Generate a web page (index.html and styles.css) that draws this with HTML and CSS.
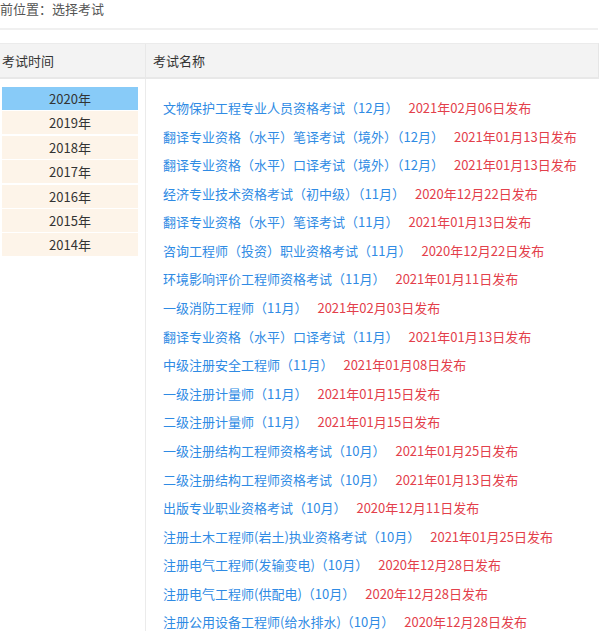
FILE: index.html
```html
<!DOCTYPE html>
<html lang="zh-CN">
<head>
  <meta charset="UTF-8">
  <title>选择考试</title>
  <link rel="stylesheet" href="styles.css">
</head>
<body>

  <div class="crumb">前位置：选择考试</div>

  <div class="exam-table">
    <div class="head-row">
      <div class="head-cell head-time">考试时间</div>
      <div class="head-cell">考试名称</div>
    </div>

    <div class="body-row">
      <ul class="years">
        <li class="year active">2020年</li>
        <li class="year">2019年</li>
        <li class="year">2018年</li>
        <li class="year">2017年</li>
        <li class="year">2016年</li>
        <li class="year">2015年</li>
        <li class="year">2014年</li>
      </ul>

      <ul class="exams">
        <li><a href="#">文物保护工程专业人员资格考试（12月）</a><span class="date">2021年02月06日发布</span></li>
        <li><a href="#">翻译专业资格（水平）笔译考试（境外）（12月）</a><span class="date">2021年01月13日发布</span></li>
        <li><a href="#">翻译专业资格（水平）口译考试（境外）（12月）</a><span class="date">2021年01月13日发布</span></li>
        <li><a href="#">经济专业技术资格考试（初中级）（11月）</a><span class="date">2020年12月22日发布</span></li>
        <li><a href="#">翻译专业资格（水平）笔译考试（11月）</a><span class="date">2021年01月13日发布</span></li>
        <li><a href="#">咨询工程师（投资）职业资格考试（11月）</a><span class="date">2020年12月22日发布</span></li>
        <li><a href="#">环境影响评价工程师资格考试（11月）</a><span class="date">2021年01月11日发布</span></li>
        <li><a href="#">一级消防工程师（11月）</a><span class="date">2021年02月03日发布</span></li>
        <li><a href="#">翻译专业资格（水平）口译考试（11月）</a><span class="date">2021年01月13日发布</span></li>
        <li><a href="#">中级注册安全工程师（11月）</a><span class="date">2021年01月08日发布</span></li>
        <li><a href="#">一级注册计量师（11月）</a><span class="date">2021年01月15日发布</span></li>
        <li><a href="#">二级注册计量师（11月）</a><span class="date">2021年01月15日发布</span></li>
        <li><a href="#">一级注册结构工程师资格考试（10月）</a><span class="date">2021年01月25日发布</span></li>
        <li><a href="#">二级注册结构工程师资格考试（10月）</a><span class="date">2021年01月13日发布</span></li>
        <li><a href="#">出版专业职业资格考试（10月）</a><span class="date">2020年12月11日发布</span></li>
        <li><a href="#">注册土木工程师(岩土)执业资格考试（10月）</a><span class="date">2021年01月25日发布</span></li>
        <li><a href="#">注册电气工程师(发输变电)（10月）</a><span class="date">2020年12月28日发布</span></li>
        <li><a href="#">注册电气工程师(供配电)（10月）</a><span class="date">2020年12月28日发布</span></li>
        <li><a href="#">注册公用设备工程师(给水排水)（10月）</a><span class="date">2020年12月28日发布</span></li>
      </ul>
    </div>
  </div>

</body>
</html>
```

FILE: styles.css
```css
body {
  margin: 0;
  background: #fff;
  font-family: "Noto Sans CJK SC", "Noto Sans", sans-serif;
  font-size: 13px;
  color: #333;
  overflow: hidden;
}
ul {
  list-style: none;
  margin: 0;
  padding: 0;
}
.crumb {
  height: 28px;
  line-height: 18px;
  color: #555;
  border-bottom: 2px solid #f0f0f0;
  width: 598px;
}
.exam-table {
  margin-top: 13px;
  width: 599px;
}
.head-row {
  display: grid;
  grid-template-columns: 146px 1fr;
  height: 33px;
  background: #f3f3f3;
  border-top: 1px solid #ebebeb;
  border-bottom: 2px solid #e8e8e8;
  border-right: 1px solid #e6e6e6;
}
.head-cell {
  line-height: 33px;
  padding-left: 7px;
  color: #333;
}
.head-time {
  padding-left: 2px;
  border-right: 1px solid #e8e8e8;
}
.body-row {
  display: grid;
  grid-template-columns: 146px 1fr;
  min-height: 560px;
}
.years {
  padding: 8px 7px 0 2px;
  border-right: 1px solid #ebebeb;
}
.year {
  height: 23px;
  line-height: 23px;
  margin-bottom: 1.4px;
  text-align: center;
  background: #fdf4e9;
  color: #333;
}
.year.active {
  background: #88cbf8;
}
.exams {
  padding: 15px 0 0 17px;
}
.exams li {
  height: 28.58px;
  line-height: 28.58px;
  white-space: nowrap;
}
.exams a {
  color: #2f8be4;
  text-decoration: none;
}
.date {
  margin-left: 10px;
  color: #e3404b;
}
```
